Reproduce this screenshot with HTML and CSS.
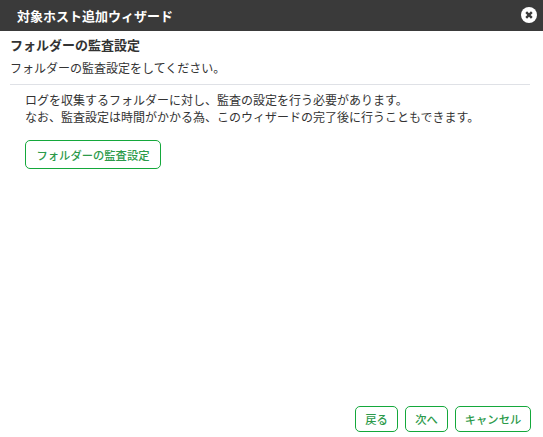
FILE: index.html
```html
<!DOCTYPE html>
<html lang="ja">
<head>
    <meta charset="UTF-8">
    <meta name="viewport" content="width=device-width, initial-scale=1.0">
    <title>対象ホスト追加ウィザード</title>
    <link rel="stylesheet" href="styles.css">
</head>
<body>
    <div class="dialog">
        <div class="title-bar">
            <span class="title">対象ホスト追加ウィザード</span>
            <svg class="close-icon" width="16" height="16" viewBox="0 0 16 16">
                <circle cx="8" cy="8" r="8" fill="#fff"/>
                <path d="M5.2 5.2L10.8 10.8M10.8 5.2L5.2 10.8" stroke="#3a3a3a" stroke-width="2.4" fill="none"/>
            </svg>
        </div>
        <div class="content">
            <h2>フォルダーの監査設定</h2>
            <p class="lead">フォルダーの監査設定をしてください。</p>
            <div class="section">
                <p>ログを収集するフォルダーに対し、監査の設定を行う必要があります。</p>
                <p>なお、監査設定は時間がかかる為、このウィザードの完了後に行うこともできます。</p>
                <button class="btn btn-audit">フォルダーの監査設定</button>
            </div>
        </div>
        <div class="footer">
            <button class="btn btn-back">戻る</button>
            <button class="btn btn-next">次へ</button>
            <button class="btn btn-cancel">キャンセル</button>
        </div>
    </div>
</body>
</html>
```
FILE: styles.css
```css
html, body {
    height: 100%;
}
body {
    margin: 0;
    font-family: "Liberation Sans", "Noto Sans CJK JP", sans-serif;
    font-size: 12px;
    color: #333;
    background-color: #fff;
}
.dialog {
    display: flex;
    flex-direction: column;
    height: 100%;
}
.title-bar {
    display: flex;
    align-items: center;
    justify-content: space-between;
    height: 31px;
    padding: 0 6px 0 17px;
    background-color: #3a3a3a;
    flex-shrink: 0;
}
.title {
    color: #fff;
    font-size: 13px;
    font-weight: bold;
}
.close-icon {
    margin-bottom: 2px;
}
.content {
    flex: 1;
    padding: 6px 13px 0 10px;
}
h2 {
    margin: 0;
    font-size: 13px;
    line-height: 18px;
    font-weight: bold;
}
.lead {
    margin: 5px 0 0;
    line-height: 18px;
    padding-bottom: 6px;
    border-bottom: 1px solid #dfe1e6;
}
.section {
    padding: 8px 0 0 15px;
}
.section p {
    margin: 0;
    line-height: 17px;
}
.btn {
    padding: 0;
    font-family: inherit;
    font-size: 11.3px;
    font-weight: 500;
    color: #2c9a4a;
    background-color: #fff;
    border: 1px solid #14a83b;
    border-radius: 5px;
}
.btn-audit {
    display: block;
    width: 136px;
    height: 29px;
    margin-top: 13px;
}
.footer {
    display: flex;
    justify-content: flex-end;
    gap: 7px;
    padding: 0 12px 5px 0;
}
.footer .btn {
    height: 26px;
}
.btn-back {
    width: 43px;
}
.btn-next {
    width: 43px;
}
.btn-cancel {
    width: 76px;
}
```
